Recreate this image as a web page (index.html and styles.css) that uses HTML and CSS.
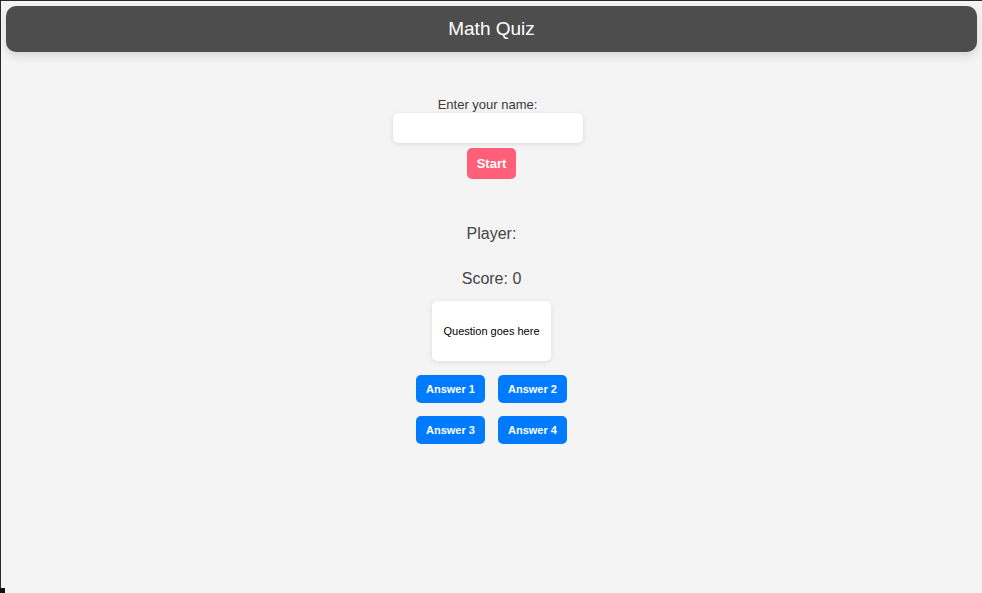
FILE: index.html
```html
<!DOCTYPE html>
<html lang="en">
<head>
<meta charset="utf-8">
<title>Math Quiz</title>
<link rel="stylesheet" href="styles.css">
</head>
<body>
<div class="frame">
  <header class="topbar">Math Quiz</header>
  <main class="main">
    <label class="name-label" for="name">Enter your name:</label>
    <input class="name-input" id="name" type="text">
    <button class="start-btn">Start</button>
    <div class="player">Player:</div>
    <div class="score">Score: 0</div>
    <div class="question">Question goes here</div>
    <div class="answers">
      <button class="answer-btn">Answer 1</button>
      <button class="answer-btn">Answer 2</button>
      <button class="answer-btn">Answer 3</button>
      <button class="answer-btn">Answer 4</button>
    </div>
  </main>
  <div class="corner-mark"></div>
</div>
</body>
</html>
```

FILE: styles.css
```css
html, body {
  margin: 0;
  padding: 0;
  height: 100%;
}
body {
  background: #f4f4f4;
  font-family: "Liberation Sans", Arial, sans-serif;
  color: #444;
  overflow: hidden;
}
.frame {
  position: relative;
  box-sizing: border-box;
  height: 593px;
  border-top: 1px solid #2a2a2a;
  border-left: 1px solid #2a2a2a;
  background: #f4f4f4;
}
.topbar {
  margin: 5px;
  height: 46px;
  line-height: 45px;
  background: #4d4d4d;
  color: #fff;
  font-size: 19px;
  text-align: center;
  border-radius: 10px;
  box-shadow: 0 4px 10px rgba(0, 0, 0, 0.12);
}
.main {
  display: flex;
  flex-direction: column;
  align-items: center;
}
.name-label {
  margin-top: 40px;
  margin-right: 8px;
  font-size: 13px;
  line-height: 16px;
  color: #3a3a3a;
}
.name-input {
  box-sizing: border-box;
  width: 190px;
  height: 30px;
  margin-right: 8px;
  border: none;
  border-radius: 5px;
  background: #fff;
  box-shadow: 0 1px 4px rgba(0, 0, 0, 0.12);
  outline: none;
}
.start-btn {
  margin-top: 5px;
  width: 49px;
  height: 31px;
  border: none;
  border-radius: 5px;
  background: #ff5f78;
  color: #fff;
  font-family: "Liberation Sans", Arial, sans-serif;
  font-size: 13px;
  font-weight: bold;
  padding: 0;
}
.player {
  margin-top: 46px;
  font-size: 16px;
  line-height: 18px;
}
.score {
  margin-top: 27px;
  font-size: 16px;
  line-height: 18px;
}
.question {
  margin-top: 13px;
  width: 119px;
  height: 60px;
  display: flex;
  align-items: center;
  justify-content: center;
  background: #fff;
  border-radius: 5px;
  box-shadow: 0 1px 5px rgba(0, 0, 0, 0.1);
  font-size: 11px;
  color: #000;
}
.answers {
  margin-top: 14px;
  display: grid;
  grid-template-columns: 69px 69px;
  column-gap: 13px;
  row-gap: 13px;
}
.answer-btn {
  height: 28px;
  border: none;
  border-radius: 5px;
  background: #007bff;
  color: #fff;
  font-family: "Liberation Sans", Arial, sans-serif;
  font-size: 11px;
  font-weight: bold;
  padding: 0;
}
.corner-mark {
  position: absolute;
  left: -1px;
  bottom: 0;
  width: 5px;
  height: 5px;
  background: #111;
}
```
